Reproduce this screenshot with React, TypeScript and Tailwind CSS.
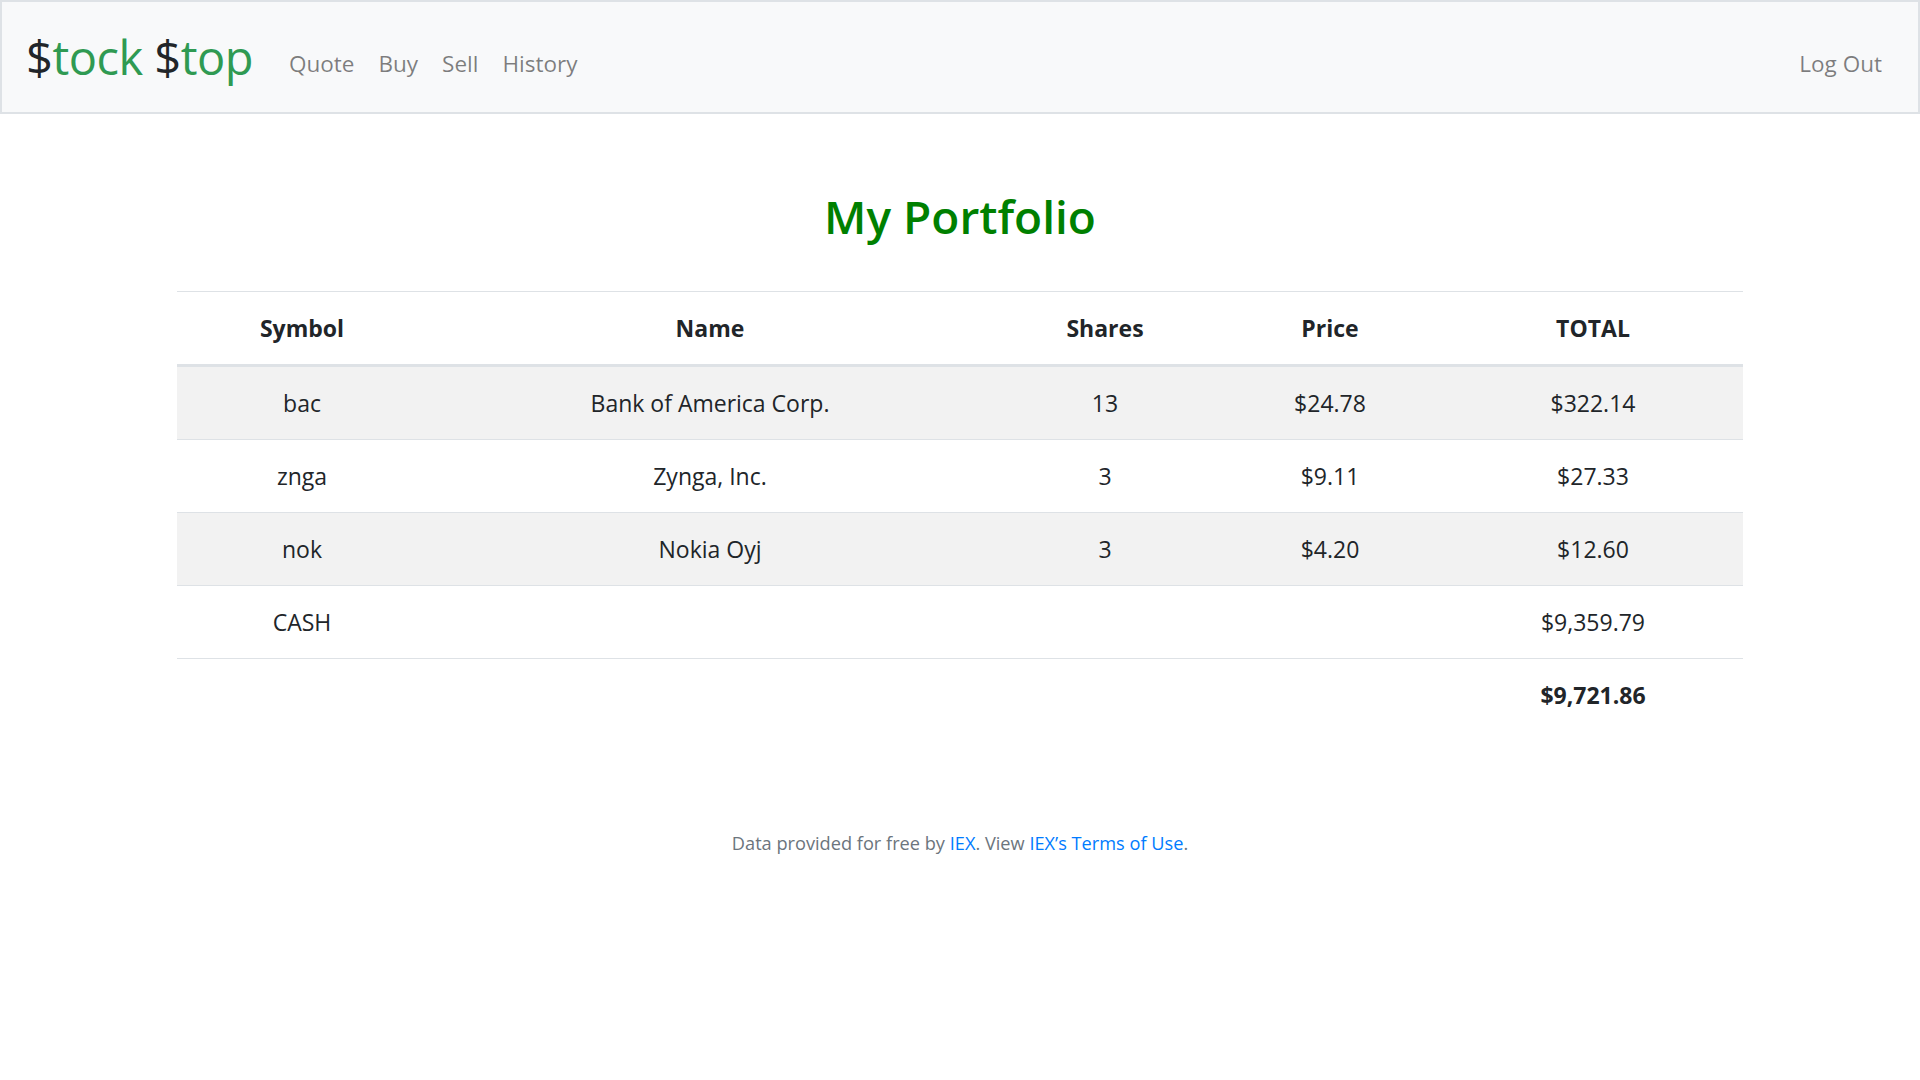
const holdings = [
  { symbol: 'bac', name: 'Bank of America Corp.', shares: '13', price: '$24.78', total: '$322.14' },
  { symbol: 'znga', name: 'Zynga, Inc.', shares: '3', price: '$9.11', total: '$27.33' },
  { symbol: 'nok', name: 'Nokia Oyj', shares: '3', price: '$4.20', total: '$12.60' },
];

const font = { fontFamily: '"Segoe UI", "Open Sans", "Noto Sans", sans-serif' };

export default function App() {
  return (
    <div className="min-h-screen bg-white text-[#212529] text-[23px] leading-[36px]" style={font}>
      <nav className="flex h-[114px] items-center border-2 border-[#dee2e6] bg-[#f8f9fa] px-6">
        <a href="#" className="mr-6 text-[47px] leading-[72px] tracking-[-0.5px]">
          <span className="text-[#212529]">$</span>
          <span className="text-[#2f9a52]">tock</span> <span className="text-[#212529]">$</span>
          <span className="text-[#2f9a52]">top</span>
        </a>
        <ul className="flex items-center pt-[14px] text-[22.5px]">
          {['Quote', 'Buy', 'Sell', 'History'].map((item) => (
            <li key={item}>
              <a href="#" className="px-3 text-black/50 hover:text-black/70">
                {item}
              </a>
            </li>
          ))}
        </ul>
        <a href="#" className="ml-auto px-3 pt-[14px] text-[22.5px] text-black/50 hover:text-black/70">
          Log Out
        </a>
      </nav>

      <main className="mx-auto w-[1566px] pt-[66px]">
        <h1 className="mb-[39px] text-center text-[46px] font-semibold leading-[72px] text-[#008000]">My Portfolio</h1>

        <table className="w-full table-fixed border-collapse text-center">
          <colgroup>
            <col className="w-[250px]" />
            <col className="w-[566px]" />
            <col className="w-[224px]" />
            <col className="w-[226px]" />
            <col />
          </colgroup>
          <thead>
            <tr className="border-t border-[#dee2e6]">
              <th className="border-b-[3px] border-[#dee2e6] py-[18px] font-bold">Symbol</th>
              <th className="border-b-[3px] border-[#dee2e6] py-[18px] font-bold">Name</th>
              <th className="border-b-[3px] border-[#dee2e6] py-[18px] font-bold">Shares</th>
              <th className="border-b-[3px] border-[#dee2e6] py-[18px] font-bold">Price</th>
              <th className="border-b-[3px] border-[#dee2e6] py-[18px] font-bold">TOTAL</th>
            </tr>
          </thead>
          <tbody>
            {holdings.map((h, i) => (
              <tr key={h.symbol} className={i % 2 === 0 ? 'bg-[#f2f2f2]' : ''}>
                <td className="border-t border-[#dee2e6] py-[18px]">{h.symbol}</td>
                <td className="border-t border-[#dee2e6] py-[18px]">{h.name}</td>
                <td className="border-t border-[#dee2e6] py-[18px]">{h.shares}</td>
                <td className="border-t border-[#dee2e6] py-[18px]">{h.price}</td>
                <td className="border-t border-[#dee2e6] py-[18px]">{h.total}</td>
              </tr>
            ))}
            <tr>
              <td className="border-t border-[#dee2e6] py-[18px]">CASH</td>
              <td className="border-t border-[#dee2e6] py-[18px]" />
              <td className="border-t border-[#dee2e6] py-[18px]" />
              <td className="border-t border-[#dee2e6] py-[18px]" />
              <td className="border-t border-[#dee2e6] py-[18px]">$9,359.79</td>
            </tr>
          </tbody>
          <tfoot>
            <tr>
              <td className="border-t border-[#dee2e6] py-[18px]" />
              <td className="border-t border-[#dee2e6] py-[18px]" />
              <td className="border-t border-[#dee2e6] py-[18px]" />
              <td className="border-t border-[#dee2e6] py-[18px]" />
              <td className="border-t border-[#dee2e6] py-[18px] font-bold">$9,721.86</td>
            </tr>
          </tfoot>
        </table>
      </main>

      <footer className="mt-[98px] text-center text-[18.2px] leading-[29px] text-[#6c757d]">
        Data provided for free by{' '}
        <a href="#" className="text-[#007bff] hover:underline">
          IEX
        </a>
        . View{' '}
        <a href="#" className="text-[#007bff] hover:underline">
          IEX’s Terms of Use
        </a>
        .
      </footer>
    </div>
  );
}
